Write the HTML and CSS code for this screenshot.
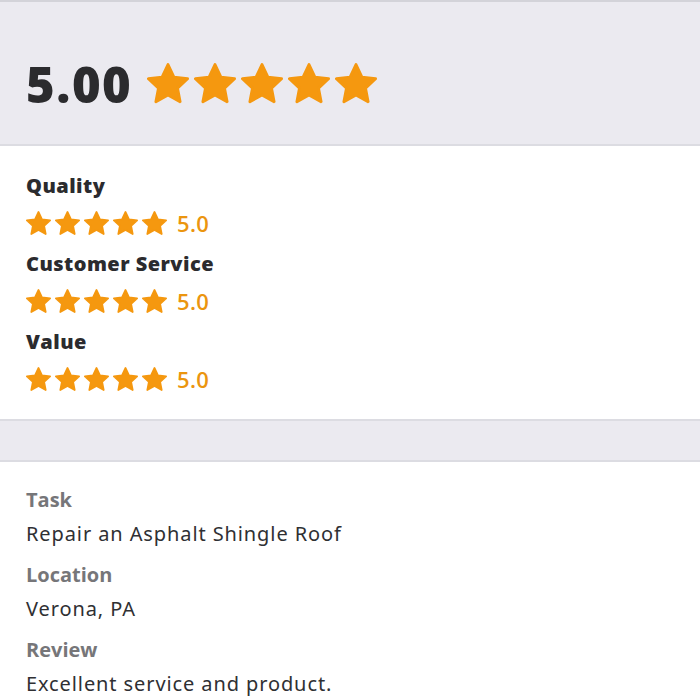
FILE: index.html
```html
<!DOCTYPE html>
<html>
<head>
<meta charset="utf-8">
<link rel="stylesheet" href="styles.css">
</head>
<body>
<svg class="defs" width="0" height="0">
  <symbol id="star" viewBox="1.85 1.85 20.3 20.3">
    <path d="M12 2.6l2.85 6.05 6.6.8-4.87 4.55 1.27 6.55L12 17.3l-5.85 3.25 1.27-6.55L2.55 9.45l6.6-.8z" fill="currentColor" stroke="currentColor" stroke-width="1.4" stroke-linejoin="round"/>
  </symbol>
</svg>
<div class="page">
  <header class="summary">
    <div class="overall">
      <span class="score">5.00</span>
      <span class="stars big">
        <svg><use href="#star"/></svg><svg><use href="#star"/></svg><svg><use href="#star"/></svg><svg><use href="#star"/></svg><svg><use href="#star"/></svg>
      </span>
    </div>
  </header>
  <section class="ratings">
    <div class="rating">
      <div class="rating-title">Quality</div>
      <div class="rating-row">
        <span class="stars small"><svg><use href="#star"/></svg><svg><use href="#star"/></svg><svg><use href="#star"/></svg><svg><use href="#star"/></svg><svg><use href="#star"/></svg></span>
        <span class="rating-num">5.0</span>
      </div>
    </div>
    <div class="rating">
      <div class="rating-title">Customer Service</div>
      <div class="rating-row">
        <span class="stars small"><svg><use href="#star"/></svg><svg><use href="#star"/></svg><svg><use href="#star"/></svg><svg><use href="#star"/></svg><svg><use href="#star"/></svg></span>
        <span class="rating-num">5.0</span>
      </div>
    </div>
    <div class="rating">
      <div class="rating-title">Value</div>
      <div class="rating-row">
        <span class="stars small"><svg><use href="#star"/></svg><svg><use href="#star"/></svg><svg><use href="#star"/></svg><svg><use href="#star"/></svg><svg><use href="#star"/></svg></span>
        <span class="rating-num">5.0</span>
      </div>
    </div>
  </section>
  <div class="spacer"></div>
  <section class="details">
    <div class="detail">
      <div class="detail-label">Task</div>
      <div class="detail-value">Repair an Asphalt Shingle Roof</div>
    </div>
    <div class="detail">
      <div class="detail-label">Location</div>
      <div class="detail-value">Verona, PA</div>
    </div>
    <div class="detail">
      <div class="detail-label">Review</div>
      <div class="detail-value">Excellent service and product.</div>
    </div>
  </section>
</div>
</body>
</html>
```

FILE: styles.css
```css
html, body {
  margin: 0;
  padding: 0;
  background: #ffffff;
}
body {
  font-family: "Noto Sans", "Liberation Sans", sans-serif;
  color: #2f3033;
}
.defs {
  position: absolute;
  width: 0;
  height: 0;
}
.summary {
  background: #ebeaf0;
  border-top: 2px solid #d3d3d9;
  border-bottom: 2px solid #dcdce2;
  height: 146px;
  box-sizing: border-box;
  display: flex;
  align-items: flex-end;
  padding: 0 26px 30px;
}
.overall {
  display: flex;
  align-items: center;
  gap: 15px;
}
.score {
  font-family: "Open Sans", "Liberation Sans", sans-serif;
  font-weight: 800;
  font-size: 49px;
  line-height: 60px;
  letter-spacing: 1.5px;
  color: #2b2b2e;
}
.stars {
  display: flex;
  color: #f5980f;
}
.stars svg {
  display: block;
}
.stars.big {
  gap: 5px;
}
.stars.big svg {
  width: 42px;
  height: 42px;
}
.stars.small {
  gap: 4px;
}
.stars.small svg {
  width: 25px;
  height: 25px;
}
.ratings {
  padding: 28px 26px 27px;
  display: flex;
  flex-direction: column;
  gap: 16px;
  border-bottom: 2px solid #dcdce2;
}
.rating-title {
  font-family: "Open Sans", "Liberation Sans", sans-serif;
  font-weight: 800;
  font-size: 20px;
  line-height: 24px;
  letter-spacing: 0.45px;
  color: #2b2b2e;
}
.rating-row {
  display: flex;
  align-items: center;
  gap: 10px;
  margin-top: 13px;
}
.rating-num {
  font-family: "Open Sans", "Liberation Sans", sans-serif;
  font-weight: 600;
  font-size: 22px;
  letter-spacing: 0.3px;
  color: #eb950f;
  line-height: 25px;
}
.spacer {
  height: 39px;
  background: #ebeaf0;
  border-bottom: 2px solid #dcdce2;
}
.details {
  padding: 24px 26px 0;
  display: flex;
  flex-direction: column;
  gap: 13px;
}
.detail {
  display: flex;
  flex-direction: column;
  gap: 6px;
}
.detail-label {
  font-family: "Open Sans", "Liberation Sans", sans-serif;
  font-weight: 700;
  font-size: 20px;
  line-height: 28px;
  color: #767679;
}
.detail-value {
  font-size: 20px;
  line-height: 28px;
  letter-spacing: 0.9px;
  color: #2f3033;
}
```
